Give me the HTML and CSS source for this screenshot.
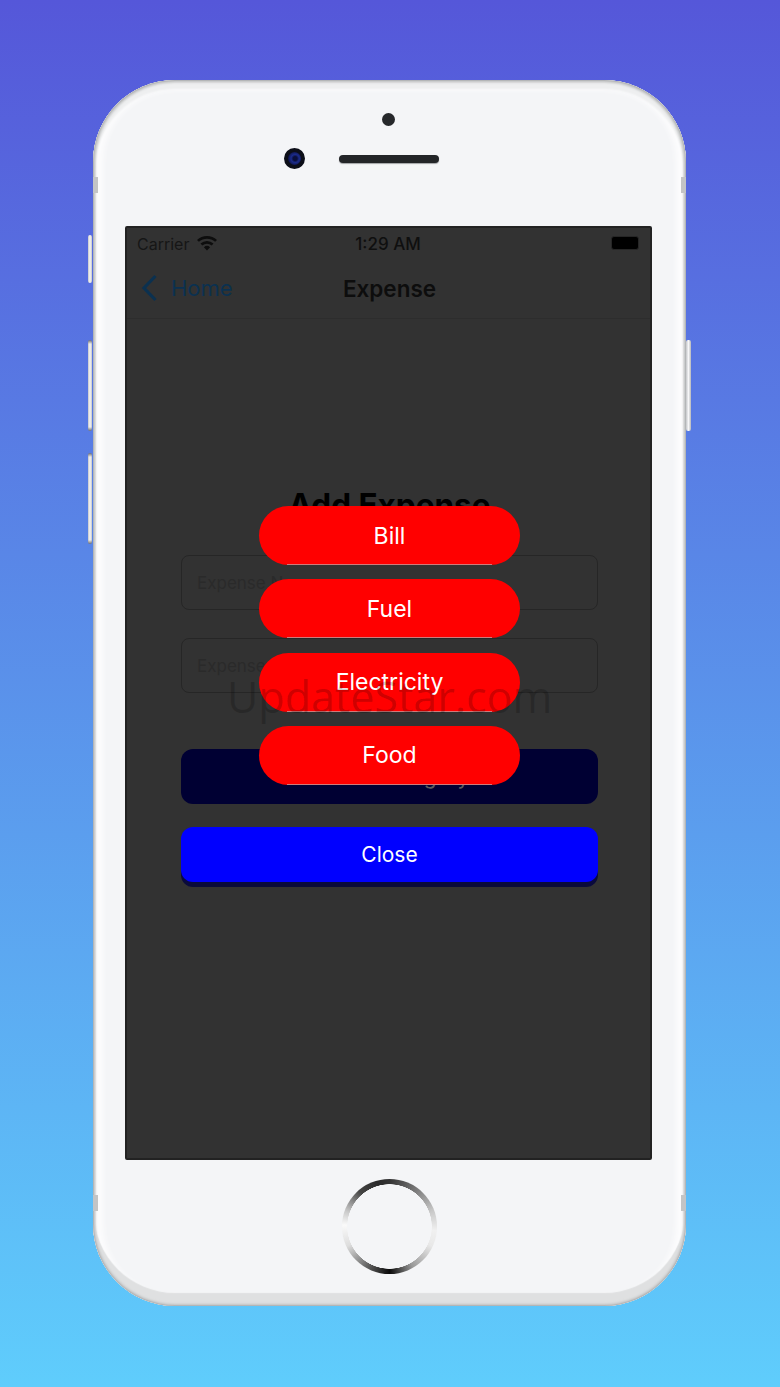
FILE: index.html
```html
<!DOCTYPE html>
<html lang="en">
<head>
<meta charset="utf-8">
<title>Expense</title>
<link rel="stylesheet" href="styles.css">
</head>
<body>
<div class="phone">
  <span class="side side-mute"></span>
  <span class="side side-up"></span>
  <span class="side side-down"></span>
  <span class="side side-power"></span>
  <span class="band band-tl"></span>
  <span class="band band-tr"></span>
  <span class="band band-bl"></span>
  <span class="band band-br"></span>
  <div class="bezel-top">
    <span class="sensor"></span>
    <div class="cam-row">
      <span class="camera"></span>
      <span class="speaker"></span>
    </div>
  </div>
  <div class="screen">
    <div class="status">
      <div class="status-left">
        <span>Carrier</span>
        <svg class="wifi" viewBox="0 0 20 15" width="20" height="15"><path d="M10 14.600 6.900 11.200a4.600 4.600 0 0 1 6.200 0zM5.300 9.500 3.500 7.600a9.600 9.600 0 0 1 13 0l-1.800 1.900a7 7 0 0 0-9.400 0zM1.900 5.800 0 3.900a14.800 14.800 0 0 1 20 0l-1.900 1.900a12 12 0 0 0-16.200 0z" fill="#0d0d0d"/></svg>
      </div>
      <span class="time">1:29 AM</span>
      <span class="battery"></span>
    </div>
    <div class="nav">
      <div class="back">
        <svg viewBox="0 0 17 28" width="17" height="28"><path d="M14.500 2 3 14l11.500 12" fill="none" stroke="#0b3150" stroke-width="3.200"/></svg>
        <span>Home</span>
      </div>
      <span class="nav-title">Expense</span>
    </div>
    <div class="content">
      <h1 class="heading">Add Expense</h1>
      <div class="field">Expense Name</div>
      <div class="field">Expense Amount</div>
      <div class="btn btn-select">Select Category</div>
      <div class="btn btn-close">Close</div>
    </div>
    <div class="menu">
      <div class="pill">Bill</div>
      <div class="pill">Fuel</div>
      <div class="pill">Electricity</div>
      <div class="pill">Food</div>
    </div>
    <div class="watermark">UpdateStar.com</div>
  </div>
  <div class="bezel-bottom">
    <span class="home"></span>
  </div>
</div>
</body>
</html>
```
FILE: styles.css
```css
* { box-sizing: border-box; }
html, body { margin: 0; height: 1387px; }
body {
  background: linear-gradient(180deg, #5557d9 0%, #5fcdfc 100%);
  padding: 80px 94px 0 93px;
  font-family: Inter, "Liberation Sans", sans-serif;
  overflow: hidden;
}
.phone {
  position: relative;
  width: 593px;
  height: 1226px;
  background: #f4f5f7;
  border-radius: 82px;
  box-shadow:
    inset 0 0 2px 1px #a9abac,
    inset 0 0 2px 3px #d5d6d7,
    inset 0 7px 2px 2px #eeeff0,
    inset 0 -12px 1px 1px #dfe0e1,
    inset 0 0 5px 10px #fcfcfd;
  padding: 0 32px;
}
.side {
  position: absolute;
  width: 4px;
  background:
    linear-gradient(180deg, #6d6f72 0, transparent 4px, transparent calc(100% - 4px), #6d6f72 100%),
    linear-gradient(90deg, #c4c6c9, #f7f7f8 50%, #c4c6c9);
  border-radius: 2px;
}
.side-mute { left: -5px; top: 155px; height: 48px; background: linear-gradient(90deg, #c4c6c9, #f7f7f8 50%, #c4c6c9); }
.side-up { left: -5px; top: 260px; height: 91px; }
.side-down { left: -5px; top: 373px; height: 91px; }
.side-power { right: -5px; width: 5px; top: 260px; height: 91px; background: linear-gradient(90deg, #c4c6c9, #f7f7f8 50%, #b4b6b9); }
.band { position: absolute; width: 5px; height: 16px; background: #c3c4c5; }
.band-tl { left: 0; top: 97px; }
.band-tr { right: 0; top: 97px; }
.band-bl { left: 0; top: 1115px; }
.band-br { right: 0; top: 1115px; }
.bezel-top {
  height: 146px;
  display: flex;
  flex-direction: column;
  align-items: center;
}
.sensor {
  width: 13px;
  height: 13px;
  margin-top: 33px;
  margin-left: -2px;
  border-radius: 50%;
  background: #26282b;
}
.cam-row {
  display: flex;
  align-items: center;
  gap: 34px;
  margin-top: 22px;
  margin-left: -57px;
}
.camera {
  width: 21px;
  height: 21px;
  border-radius: 50%;
  border: 4px solid #0c0e18;
  background: radial-gradient(circle at 55% 50%, #0a0f3c 0 2px, #1b2b8a 4px, #10164d 7px);
}
.speaker {
  width: 100px;
  height: 8px;
  border-radius: 4px;
  background: #232528;
  box-shadow: 0 1px 1px #a0a2a5;
}
.screen {
  position: relative;
  width: 527px;
  height: 934px;
  background: #323232;
  border: 2px solid #222222;
  border-radius: 2px;
  overflow: hidden;
}
.status {
  display: grid;
  grid-template-columns: 1fr auto 1fr;
  align-items: center;
  height: 32px;
  padding: 0 11px 0 10px;
  font-size: 16px;
  color: #0f0f0f;
}
.status-left { display: flex; align-items: center; gap: 8px; color: #161616; }
.wifi { margin-top: -2px; }
.time { font-size: 17px; font-weight: 500; }
.battery {
  justify-self: end;
  width: 28px;
  height: 14px;
  margin-top: -2px;
  border-radius: 3px;
  background: #000000;
  border: 1px solid #262626;
}
.nav {
  position: relative;
  display: flex;
  align-items: center;
  justify-content: center;
  height: 59px;
  padding: 0 0 2px 2px;
  border-bottom: 1px solid #2d2d2d;
}
.back {
  position: absolute;
  left: 14px;
  top: 14px;
  display: flex;
  align-items: center;
  gap: 13px;
  color: #0b3150;
  font-size: 22px;
}
.nav-title { font-size: 22.500px; font-weight: 600; color: #0d0d0d; }
.content {
  display: flex;
  flex-direction: column;
  padding: 168px 52px 0 54px;
}
.heading {
  margin: 0 0 33px;
  height: 35px;
  line-height: 35px;
  font-size: 31.500px;
  font-weight: 700;
  text-align: center;
  color: #000000;
}
.field {
  height: 55px;
  margin-bottom: 28px;
  padding: 0 15px;
  display: flex;
  align-items: center;
  border: 1px solid #262626;
  border-radius: 8px;
  font-size: 17px;
  color: #2a2a2a;
}
.btn {
  display: flex;
  align-items: center;
  justify-content: center;
  height: 55px;
  border-radius: 12px;
  font-size: 21px;
}
.btn-select {
  margin-top: 28px;
  background: #000033;
  color: #5c5c5c;
}
.btn-close {
  margin-top: 23px;
  background: #0000ff;
  color: #ffffff;
  box-shadow: 0 5px 0 #0a0a3c;
}
.menu {
  position: absolute;
  left: 132px;
  top: 278px;
  width: 261px;
  display: flex;
  flex-direction: column;
  gap: 14.300px;
}
.pill {
  position: relative;
  display: flex;
  align-items: center;
  justify-content: center;
  height: 59px;
  border-radius: 30px;
  background: #ff0000;
  color: #ffffff;
  font-size: 23px;
}
.pill::after {
  content: "";
  position: absolute;
  left: 28px;
  right: 28px;
  bottom: 0;
  height: 1px;
  background: #d07a7a;
}
.watermark {
  position: absolute;
  left: 100px;
  top: 440px;
  font-family: "Open Sans", sans-serif;
  font-size: 43px;
  line-height: 58px;
  color: rgba(0, 0, 0, 0.2);
  white-space: nowrap;
}
.bezel-bottom {
  display: flex;
  justify-content: center;
  padding-top: 19px;
}
.home {
  width: 95px;
  height: 95px;
  border-radius: 50%;
  background:
    radial-gradient(circle, #f4f5f7 0 42px, transparent 42.500px),
    conic-gradient(from 0deg, #333 0deg, #777 35deg, #c8c8c8 70deg, #f0f0f0 95deg, #e8e8e8 115deg, #999 150deg, #0a0a0a 180deg, #555 205deg, #ddd 245deg, #fafafa 272deg, #c8c8c8 290deg, #444 320deg, #2a2a2a 345deg, #333 360deg);
}
```
